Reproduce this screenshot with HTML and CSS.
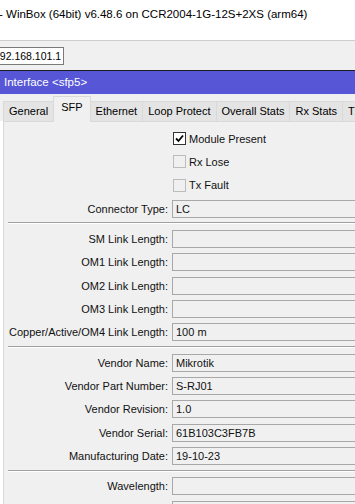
FILE: index.html
```html
<!DOCTYPE html>
<html>
<head>
<meta charset="utf-8">
<link rel="stylesheet" href="styles.css">
</head>
<body>
<div class="app">
  <div class="titlebar">- WinBox (64bit) v6.48.6 on CCR2004-1G-12S+2XS (arm64)</div>
  <div class="toolbar">
    <div class="addr">192.168.101.1</div>
  </div>
  <div class="wintitle">Interface &lt;sfp5&gt;</div>
  <div class="tabs">
    <div class="tab">General</div>
    <div class="tab active">SFP</div>
    <div class="tab">Ethernet</div>
    <div class="tab">Loop Protect</div>
    <div class="tab">Overall Stats</div>
    <div class="tab">Rx Stats</div>
    <div class="tab">Tx Stats</div>
  </div>
  <div class="panel">
    <div class="form">
      <div class="row check-row"><span></span><label class="check"><span class="box checked"><svg viewBox="0 0 11 11" width="11" height="11"><path d="M2 5.5 L4.5 8 L9 2.5" fill="none" stroke="#000" stroke-width="1.8"/></svg></span>Module Present</label></div>
      <div class="row check-row"><span></span><label class="check"><span class="box"></span>Rx Lose</label></div>
      <div class="row check-row"><span></span><label class="check"><span class="box"></span>Tx Fault</label></div>
      <div class="row"><span class="lbl">Connector Type:</span><div class="field">LC</div></div>
      <div class="sep"></div>
      <div class="row"><span class="lbl">SM Link Length:</span><div class="field"></div></div>
      <div class="row"><span class="lbl">OM1 Link Length:</span><div class="field"></div></div>
      <div class="row"><span class="lbl">OM2 Link Length:</span><div class="field"></div></div>
      <div class="row"><span class="lbl">OM3 Link Length:</span><div class="field"></div></div>
      <div class="row"><span class="lbl">Copper/Active/OM4 Link Length:</span><div class="field">100 m</div></div>
      <div class="sep"></div>
      <div class="row"><span class="lbl">Vendor Name:</span><div class="field">Mikrotik</div></div>
      <div class="row"><span class="lbl">Vendor Part Number:</span><div class="field">S-RJ01</div></div>
      <div class="row"><span class="lbl">Vendor Revision:</span><div class="field">1.0</div></div>
      <div class="row"><span class="lbl">Vendor Serial:</span><div class="field">61B103C3FB7B</div></div>
      <div class="row"><span class="lbl">Manufacturing Date:</span><div class="field">19-10-23</div></div>
      <div class="sep"></div>
      <div class="row"><span class="lbl">Wavelength:</span><div class="field"></div></div>
      <div class="row"><span class="lbl">Temperature:</span><div class="field"></div></div>
    </div>
  </div>
</div>
</body>
</html>
```

FILE: styles.css
```css
html, body {
  margin: 0;
  padding: 0;
  background: #ffffff;
  overflow: hidden;
}
body {
  width: 355px;
  height: 504px;
  font-family: "Liberation Sans", Arial, sans-serif;
  font-size: 11px;
  color: #000;
}
.app {
  width: 420px;
}
.titlebar {
  height: 41px;
  box-sizing: border-box;
  padding-top: 6px;
  font-size: 11.5px;
  line-height: 16px;
  color: #000;
  background: #fff;
  border-bottom: 1px solid #cdcdcd;
  white-space: nowrap;
  margin-left: -1px;
}
.toolbar {
  height: 30px;
  box-sizing: border-box;
  background: #f0f0f0;
  padding-top: 6px;
  border-bottom: 1px solid #1e1e1e;
  display: flex;
}
.addr {
  margin-left: -9px;
  height: 18px;
  box-sizing: border-box;
  padding: 0 2px 0 2px;
  border: 1px solid #7a7a7a;
  background: #fff;
  line-height: 16px;
  font-size: 10.5px;
  white-space: nowrap;
}
.wintitle {
  height: 23px;
  background: #5656d6;
  color: #fff;
  line-height: 23px;
  padding-left: 4px;
  font-size: 11.5px;
}
.tabs {
  height: 27px;
  box-sizing: border-box;
  background: #f0f0f0;
  display: flex;
  align-items: flex-end;
  padding-left: 3px;
  white-space: nowrap;
}
.tab {
  height: 20px;
  box-sizing: border-box;
  line-height: 18px;
  padding: 0 5px;
  background: #e4e4e4;
  border: 1px solid #d9d9d9;
  border-bottom: none;
  margin-right: -1px;
}
.tab.active {
  height: 26px;
  line-height: 20px;
  background: #f0f0f0;
  position: relative;
  z-index: 1;
  margin-bottom: -1px;
  padding: 0 7px;
}
.panel {
  margin-left: 3px;
  border-top: 1px solid #d9d9d9;
  border-left: 1px solid #d9d9d9;
  background: #f0f0f0;
  padding-top: 5px;
  height: 400px;
}
.form {
  display: grid;
  grid-template-columns: 164px 1fr;
  column-gap: 4px;
}
.row {
  display: contents;
}
.row > * {
  height: 23.33px;
  display: flex;
  align-items: center;
}
.lbl {
  justify-content: flex-end;
  white-space: nowrap;
  color: #111;
}
.row > .field {
  height: 18px;
  margin: 2.66px 0;
  box-sizing: border-box;
  border: 1px solid #a8a8a8;
  background: #f0f0f0;
  padding-left: 3px;
  color: #111;
}
.check {
  display: flex;
  align-items: center;
  gap: 2px;
  padding-left: 1px;
  color: #111;
}
.box {
  width: 13px;
  height: 13px;
  box-sizing: border-box;
  border: 1px solid #bcbcbc;
  background: #f0f0f0;
  display: flex;
  align-items: center;
  justify-content: center;
  margin-right: 1px;
}
.box.checked {
  border-color: #333;
  background: #fff;
}
.sep {
  grid-column: 1 / -1;
  margin: 2px 0 3px 4px;
  height: 2px;
  box-sizing: border-box;
  border-top: 1px solid #a0a0a0;
  border-bottom: 1px solid #fff;
}
```
